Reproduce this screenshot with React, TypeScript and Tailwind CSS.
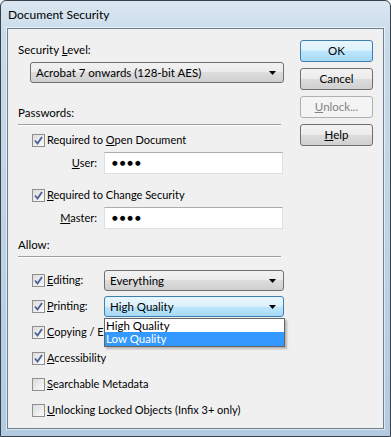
import React from 'react';

const font = { fontFamily: 'Lato, "Noto Sans", "Liberation Sans", sans-serif' };

function Check({ checked = true }: { checked?: boolean }) {
  return (
    <span className="inline-flex w-[13px] h-[13px] shrink-0 border border-[#8e8f8f] bg-gradient-to-br from-[#dcdcdc] to-[#fbfbfb] items-center justify-center">
      {checked && (
        <svg width="9" height="9" viewBox="0 0 9 9">
          <path d="M1 4.5 L3.5 7.5 L8 1" fill="none" stroke="#4a5f97" strokeWidth="1.8" />
        </svg>
      )}
    </span>
  );
}

function Arrow() {
  return (
    <svg width="7" height="4" viewBox="0 0 7 4" className="shrink-0">
      <polygon points="0,0 7,0 3.5,4" fill="#000" />
    </svg>
  );
}

function Select({ value, focused = false, width }: { value: string; focused?: boolean; width: string }) {
  return (
    <div
      className={`${width} h-[21px] flex items-center justify-between pl-[5px] pr-[7px] rounded-[3px] border ${
        focused
          ? 'border-[#3c7fb1] bg-[linear-gradient(#eaf6fd_0%,#d9f0fc_50%,#bee6fd_50%,#a7d9f5_100%)]'
          : 'border-[#707070] bg-[linear-gradient(#f2f2f2_0%,#ebebeb_50%,#dddddd_50%,#cfcfcf_100%)]'
      }`}
    >
      <span className="leading-none text-[11.5px]">{value}</span>
      <Arrow />
    </div>
  );
}

function Password() {
  return (
    <div className="w-[179px] h-[22px] bg-white border border-[#dbdfe6] border-t-[#abadb3] flex items-center pl-[7px]">
      <span className="text-[6.5px] tracking-[2px] leading-none" style={{ fontFamily: '"DejaVu Sans", sans-serif' }}>●●●●</span>
    </div>
  );
}

function CheckRow({ children, checked = true, className = '' }: { children: React.ReactNode; checked?: boolean; className?: string }) {
  return (
    <div className={`flex items-center gap-[2px] ml-[14px] h-[16px] ${className}`}>
      <Check checked={checked} />
      <span>{children}</span>
    </div>
  );
}

function Button({ children, primary = false, disabled = false }: { children: React.ReactNode; primary?: boolean; disabled?: boolean }) {
  let cls = 'border-[#707070] bg-[linear-gradient(#f2f2f2_0%,#ebebeb_50%,#dddddd_50%,#cfcfcf_100%)] text-black';
  if (primary) cls = 'border-[#3c7fb1] bg-[linear-gradient(#eaf6fd_0%,#d9f0fc_50%,#bee6fd_50%,#a7d9f5_100%)] text-black';
  if (disabled) cls = 'border-[#adb2b5] bg-[#f4f4f4] text-[#838383]';
  return (
    <div className={`w-[73px] h-[22px] rounded-[3px] border flex items-center justify-center text-[11.5px] ${cls}`}>
      {children}
    </div>
  );
}

export default function App() {
  return (
    <div
      style={font}
      className="w-[391px] h-[437px] text-[11px] text-black flex flex-col border border-[#39424b] rounded-t-[6px] bg-[linear-gradient(180deg,#dbe7f1_0%,#c8dbea_8%,#bcd2e5_60%,#b2cbe1_100%)] px-[6px] pb-[7px]"
    >
      {/* title bar */}
      <div className="h-[27px] flex items-center pl-[1px] pt-[1px]">
        <span className="text-[12px]">Document Security</span>
      </div>

      {/* client area */}
      <div className="flex-1 border border-[#6d7e8f] shadow-[0_0_0_1px_rgba(255,255,255,0.55)] bg-[#f0f0f0] flex pl-[10px] pr-[10px]">
        {/* left column */}
        <div className="relative flex flex-col pt-[13px] w-[266px]">
          <div className="h-[16px] leading-[16px] text-[11.5px]">Security <u>L</u>evel:</div>
          <div className="mt-[4px] ml-[12px]">
            <Select value="Acrobat 7 onwards (128-bit AES)" width="w-[254px]" />
          </div>

          <div className="mt-[22px] h-[16px] leading-[16px] text-[11.5px]">Passwords:</div>
          <div className="mt-[3px] h-[2px] w-[263px] border-t border-[#a0a0a0] border-b border-b-white" />

          <CheckRow className="mt-[6px]">Required to <u>O</u>pen Document</CheckRow>
          <div className="mt-[4px] flex items-center">
            <span className="w-[86px] text-right pr-[7px]"><u>U</u>ser:</span>
            <Password />
          </div>

          <CheckRow className="mt-[13px]"><u>R</u>equired to Change Security</CheckRow>
          <div className="mt-[4px] flex items-center">
            <span className="w-[86px] text-right pr-[7px]"><u>M</u>aster:</span>
            <Password />
          </div>

          <div className="mt-[8px] h-[16px] leading-[16px] text-[11.5px]">Allow:</div>
          <div className="mt-[3px] h-[2px] w-[263px] border-t border-[#a0a0a0] border-b border-b-white" />

          <div className="mt-[12px] flex items-center">
            <CheckRow className="w-[72px]"><u>E</u>diting:</CheckRow>
            <Select value="Everything" width="w-[180px]" />
          </div>
          <div className="mt-[5px] flex items-center">
            <CheckRow className="w-[72px]"><u>P</u>rinting:</CheckRow>
            <Select value="High Quality" focused width="w-[180px]" />
          </div>

          <CheckRow className="mt-[7px]"><u>C</u>opying / Export</CheckRow>
          <CheckRow className="mt-[10px]"><u>A</u>ccessibility</CheckRow>
          <CheckRow checked={false} className="mt-[10px]"><u>S</u>earchable Metadata</CheckRow>
          <CheckRow checked={false} className="mt-[10px]"><u>U</u>nlocking Locked Objects (Infix 3+ only)</CheckRow>

          {/* open dropdown list */}
          <div className="absolute left-[86px] top-[289px] w-[181px] bg-white border border-[#646464] shadow-[2px_2px_2px_rgba(0,0,0,0.25)] text-[11.5px]">
            <div className="h-[13px] leading-[13px] pl-[1px]">High Quality</div>
            <div className="h-[14px] leading-[14px] pl-[1px] bg-[#3399ff] text-white">Low Quality</div>
          </div>
        </div>

        {/* right column */}
        <div className="ml-auto flex flex-col gap-[6px] pt-[11px]">
          <Button primary>OK</Button>
          <Button>Cancel</Button>
          <Button disabled><u>U</u>nlock...</Button>
          <Button><u>H</u>elp</Button>
        </div>
      </div>
    </div>
  );
}
